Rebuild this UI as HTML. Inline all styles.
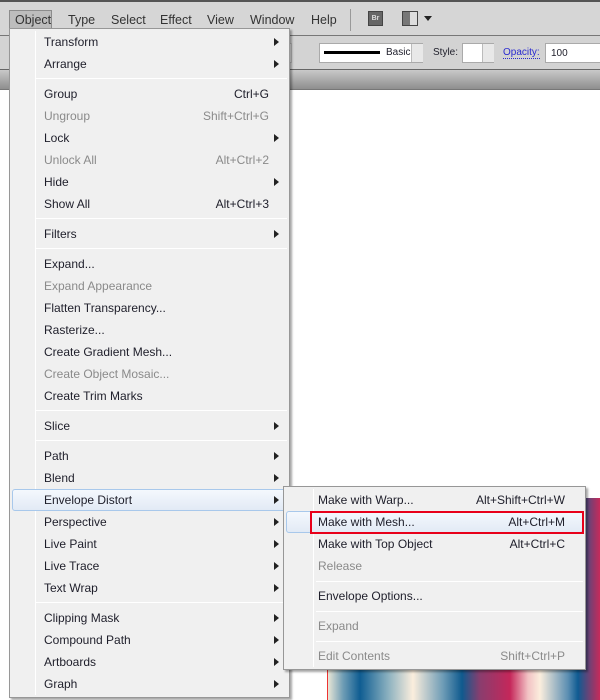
<!DOCTYPE html>
<html><head><style>
*{margin:0;padding:0;box-sizing:border-box}
body{width:600px;height:700px;overflow:hidden;position:relative;background:#fff;font-family:"Liberation Sans",sans-serif;font-size:12px;color:#1e1e2a}
.a{position:absolute}
.mb span{position:absolute;top:11px;font-size:12.5px;color:#333}
.menu{position:absolute;background:#f0f0f0;border:1px solid #979797;box-shadow:2px 2px 2px rgba(0,0,0,.35)}
.it{position:absolute;left:0;right:0;height:22px;line-height:22px}
.it .t{position:absolute;left:34px}
.it .k{position:absolute;right:20px}
.it .r{position:absolute;right:10px;top:7px;width:0;height:0;border-left:5px solid #222;border-top:4px solid transparent;border-bottom:4px solid transparent}
.dis{color:#8a8a8a}
.sep{position:absolute;left:26px;right:2px;height:1px;background:#d7d7d7;border-bottom:1px solid #fff}
</style></head><body>
<div class="a" style="left:0;top:0;width:600px;height:2px;background:#555"></div>
<div class="a mb" style="left:0;top:2px;width:600px;height:34px;background:#d6d6d6">
<div class="a" style="left:9px;top:8px;width:43px;height:21px;background:#bdbdbd;border:1px solid #8c8c8c"></div>
<span style="left:15px">Object</span><span style="left:68px">Type</span><span style="left:111px">Select</span><span style="left:160px">Effect</span><span style="left:207px">View</span><span style="left:250px">Window</span><span style="left:311px">Help</span>
<div class="a" style="left:350px;top:7px;width:1px;height:22px;background:#999"></div>
<div class="a" style="left:368px;top:9px;width:15px;height:15px;background:#666;border:1px solid #444;color:#ddd;font-size:7px;line-height:13px;text-align:center;font-weight:bold">Br</div>
<div class="a" style="left:402px;top:9px;width:16px;height:15px;border:1px solid #444;background:linear-gradient(90deg,#777 0 50%,#ddd 50%)"></div>
<div class="a" style="left:424px;top:14px;border-top:5px solid #222;border-left:4px solid transparent;border-right:4px solid transparent"></div>
</div>
<div class="a" style="left:0;top:35px;width:600px;height:1px;background:#777"></div>
<div class="a" style="left:0;top:36px;width:600px;height:33px;background:#d3d3d3"></div>
<div class="a" style="left:270px;top:43px;width:22px;height:20px;background:#e8e8e8;border:1px solid #bbb"></div>
<div class="a" style="left:319px;top:43px;width:104px;height:20px;background:#fff;border:1px solid #aaa"></div>
<div class="a" style="left:324px;top:51px;width:56px;height:3px;background:#000"></div>
<div class="a" style="left:386px;top:47px;font-size:10px">Basic</div>
<div class="a" style="left:411px;top:44px;width:12px;height:18px;background:#e8e8e8;border-left:1px solid #bbb"></div>
<div class="a" style="left:433px;top:47px;font-size:10px">Style:</div>
<div class="a" style="left:462px;top:43px;width:32px;height:20px;background:#fff;border:1px solid #aaa"></div>
<div class="a" style="left:482px;top:44px;width:12px;height:18px;background:#e8e8e8;border-left:1px solid #bbb"></div>
<div class="a" style="left:503px;top:47px;font-size:10px;color:#2a2ad0;border-bottom:1px dotted #2a2ad0">Opacity:</div>
<div class="a" style="left:545px;top:43px;width:60px;height:20px;background:#fff;border:1px solid #aaa;font-size:10px;padding:4px 0 0 5px">100</div>
<div class="a" style="left:0;top:69px;width:600px;height:20px;background:linear-gradient(#c9c9c9,#8e8e8e);border-top:1px solid #666"></div>
<div class="a" style="left:0;top:89px;width:600px;height:1px;background:#777"></div>
<div class="a" style="left:327px;top:498px;width:1px;height:202px;background:#e33"></div>
<div class="a" style="left:328px;top:498px;width:272px;height:202px;background:linear-gradient(90deg,#e9e6d6 0px,#6f9db5 15px,#0f5d92 32px,#8ab0bf 60px,#fbeedd 85px,#6e9cb6 115px,#0f5a8e 134px,#8a3d6e 152px,#c5275a 182px,#f2c2c4 200px,#fbeedd 212px,#5b8eb2 240px,#0f5b92 250px,#c72a5a 272px)"></div>
<div class="menu" style="left:9px;top:28px;width:281px;height:670px">
<div class="a" style="left:25px;top:2px;width:1px;height:664px;background:#e2e3e3;border-right:1px solid #fff"></div>
<div class="a" style="left:2px;top:460px;width:277px;height:22px;border:1px solid #a8c8eb;border-radius:3px;background:linear-gradient(#f4f8fd,#e2eaf5)"></div>
<div class="it" style="top:2px"><span class="t">Transform</span><i class="r"></i></div>
<div class="it" style="top:24px"><span class="t">Arrange</span><i class="r"></i></div>
<div class="sep" style="top:49px"></div>
<div class="it" style="top:54px"><span class="t">Group</span><span class="k">Ctrl+G</span></div>
<div class="it dis" style="top:76px"><span class="t">Ungroup</span><span class="k">Shift+Ctrl+G</span></div>
<div class="it" style="top:98px"><span class="t">Lock</span><i class="r"></i></div>
<div class="it dis" style="top:120px"><span class="t">Unlock All</span><span class="k">Alt+Ctrl+2</span></div>
<div class="it" style="top:142px"><span class="t">Hide</span><i class="r"></i></div>
<div class="it" style="top:164px"><span class="t">Show All</span><span class="k">Alt+Ctrl+3</span></div>
<div class="sep" style="top:189px"></div>
<div class="it" style="top:194px"><span class="t">Filters</span><i class="r"></i></div>
<div class="sep" style="top:219px"></div>
<div class="it" style="top:224px"><span class="t">Expand...</span></div>
<div class="it dis" style="top:246px"><span class="t">Expand Appearance</span></div>
<div class="it" style="top:268px"><span class="t">Flatten Transparency...</span></div>
<div class="it" style="top:290px"><span class="t">Rasterize...</span></div>
<div class="it" style="top:312px"><span class="t">Create Gradient Mesh...</span></div>
<div class="it dis" style="top:334px"><span class="t">Create Object Mosaic...</span></div>
<div class="it" style="top:356px"><span class="t">Create Trim Marks</span></div>
<div class="sep" style="top:381px"></div>
<div class="it" style="top:386px"><span class="t">Slice</span><i class="r"></i></div>
<div class="sep" style="top:411px"></div>
<div class="it" style="top:416px"><span class="t">Path</span><i class="r"></i></div>
<div class="it" style="top:438px"><span class="t">Blend</span><i class="r"></i></div>
<div class="it" style="top:460px"><span class="t">Envelope Distort</span><i class="r"></i></div>
<div class="it" style="top:482px"><span class="t">Perspective</span><i class="r"></i></div>
<div class="it" style="top:504px"><span class="t">Live Paint</span><i class="r"></i></div>
<div class="it" style="top:526px"><span class="t">Live Trace</span><i class="r"></i></div>
<div class="it" style="top:548px"><span class="t">Text Wrap</span><i class="r"></i></div>
<div class="sep" style="top:573px"></div>
<div class="it" style="top:578px"><span class="t">Clipping Mask</span><i class="r"></i></div>
<div class="it" style="top:600px"><span class="t">Compound Path</span><i class="r"></i></div>
<div class="it" style="top:622px"><span class="t">Artboards</span><i class="r"></i></div>
<div class="it" style="top:644px"><span class="t">Graph</span><i class="r"></i></div>
</div>
<div class="menu" style="left:283px;top:486px;width:303px;height:184px">
<div class="a" style="left:29px;top:2px;width:1px;height:178px;background:#e2e3e3;border-right:1px solid #fff"></div>
<div class="a" style="left:2px;top:24px;width:297px;height:22px;border:1px solid #a8c8eb;border-radius:3px;background:linear-gradient(#f4f8fd,#e2eaf5)"></div>
<div class="a" style="left:26px;top:24px;width:274px;height:23px;border:2px solid #e8001a"></div>
<div class="it" style="top:2px"><span class="t">Make with Warp...</span><span class="k">Alt+Shift+Ctrl+W</span></div>
<div class="it" style="top:24px"><span class="t">Make with Mesh...</span><span class="k">Alt+Ctrl+M</span></div>
<div class="it" style="top:46px"><span class="t">Make with Top Object</span><span class="k">Alt+Ctrl+C</span></div>
<div class="it dis" style="top:68px"><span class="t">Release</span></div>
<div class="sep" style="top:94px;left:32px"></div>
<div class="it" style="top:98px"><span class="t">Envelope Options...</span></div>
<div class="sep" style="top:124px;left:32px"></div>
<div class="it dis" style="top:128px"><span class="t">Expand</span></div>
<div class="sep" style="top:154px;left:32px"></div>
<div class="it dis" style="top:158px"><span class="t">Edit Contents</span><span class="k">Shift+Ctrl+P</span></div>
</div>
</body></html>
